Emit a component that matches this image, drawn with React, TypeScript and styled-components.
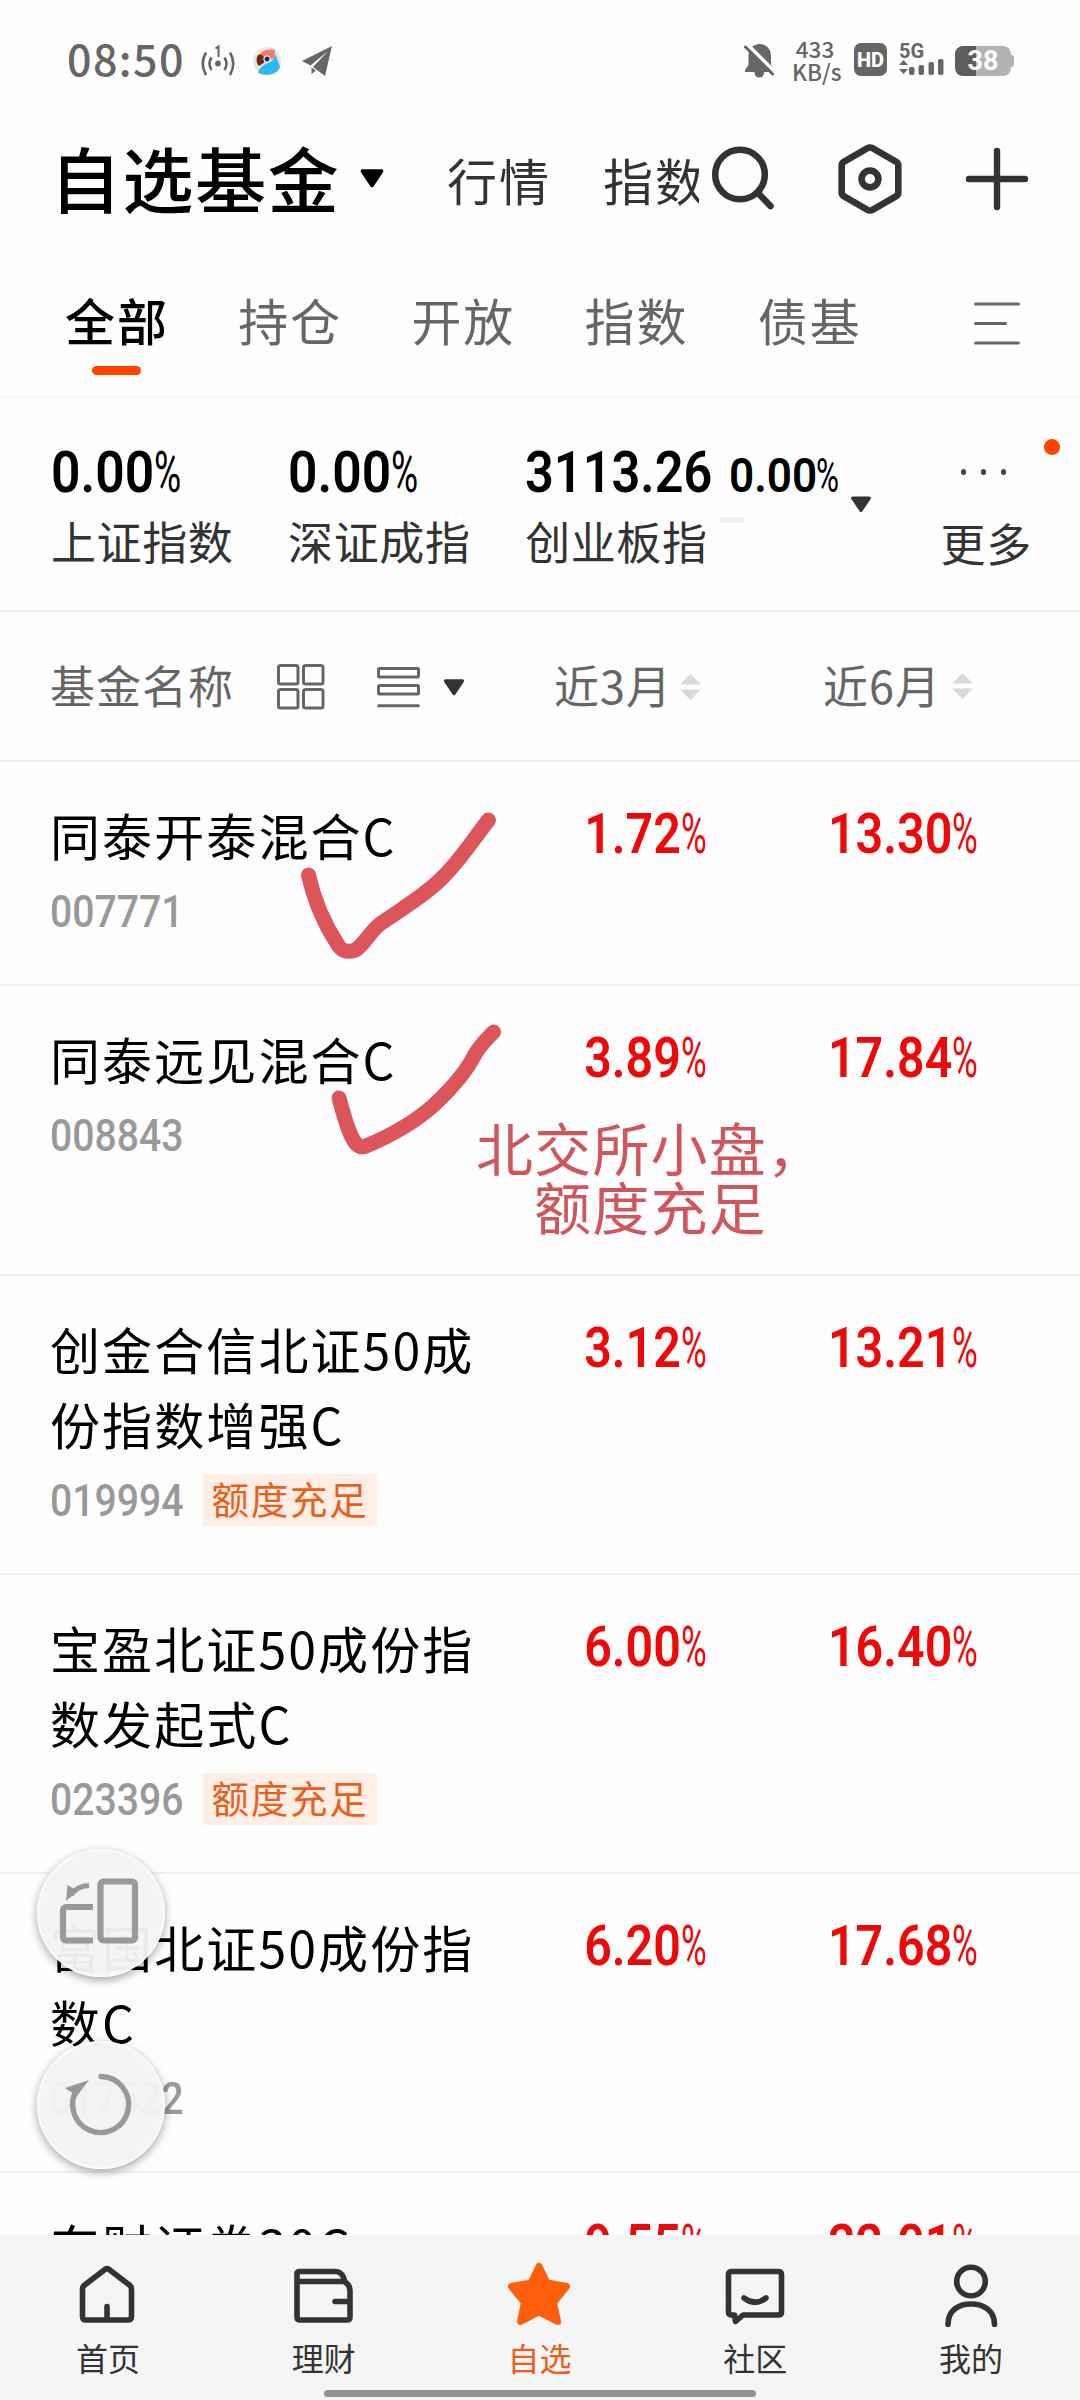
import React from 'react';
import styled, { createGlobalStyle } from 'styled-components';

const Global = createGlobalStyle`
  *, *::before, *::after { box-sizing: border-box; }
  html, body { margin: 0; padding: 0; background: #fefefe; }
  svg { display: block; flex: none; }
`;

const cjk = `'Noto Sans CJK SC', 'Noto Sans', sans-serif`;
const num = `Roboto, 'Noto Sans CJK SC', sans-serif`;

const Screen = styled.main`
  position: relative;
  width: 1080px;
  height: 2400px;
  overflow: hidden;
  display: flex;
  flex-direction: column;
  background: #fefefe;
  color: #000;
  font-family: ${cjk};
`;

const Gap = styled.span<{ $w: number }>`
  width: ${(p) => p.$w}px;
  flex: none;
`;

/* ---------- status bar ---------- */

const StatusBar = styled.header`
  height: 122px;
  flex: none;
  display: flex;
  justify-content: space-between;
  padding: 0 66px 0 67px;
  color: #666;
`;

const StatusGroup = styled.div`
  display: flex;
  align-items: center;
`;

const Clock = styled.span`
  width: 134px;
  font-size: 43px;
  font-weight: 500;
  line-height: 60px;
  letter-spacing: 1.4px;
  padding-bottom: 8px;
`;

const Speed = styled.div`
  width: 46px;
  margin: 0 16px 2px 17px;
  font-size: 22.5px;
  line-height: 23px;
  font-weight: 500;
  text-align: center;
  white-space: nowrap;
`;

const HdBadge = styled.span`
  width: 33px;
  height: 33px;
  margin-bottom: 3px;
  border-radius: 7px;
  background: #666;
  color: #fff;
  font: 800 20px/34px ${num};
  text-align: center;
`;

const Network = styled.div`
  width: 46px;
  height: 34px;
  margin: 0 10px 2px 12px;
  display: flex;
  flex-direction: column;
  font: 700 20px/16px ${num};
`;

const Battery = styled.div`
  width: 56px;
  height: 30px;
  border-radius: 8px;
  background: linear-gradient(90deg, #5c5c5c 38%, #b3b3b3 38%);
  color: #fff;
  font: 700 27px/31px ${num};
  text-align: center;
`;

const BatteryCap = styled.i`
  width: 3px;
  height: 12px;
  border-radius: 0 3px 3px 0;
  background: #b3b3b3;
`;

/* ---------- title ---------- */

const TitleBar = styled.div`
  height: 122px;
  flex: none;
  display: flex;
  align-items: center;
  padding: 0 50px 9px 50px;
`;

const Title = styled.h1`
  margin: 0;
  width: 309px;
  padding-bottom: 5px;
  font-size: 71px;
  line-height: 96px;
  font-weight: 500;
  letter-spacing: 1.6px;
  white-space: nowrap;
`;

const TopLink = styled.span<{ $w: number }>`
  width: ${(p) => p.$w}px;
  overflow: hidden;
  white-space: nowrap;
  color: #333;
  font-size: 50px;
  line-height: 70px;
  letter-spacing: 2px;
`;

const TitleIcons = styled.div`
  display: flex;
  align-items: center;
  margin-left: 10px;
  gap: 63px;
`;

/* ---------- tabs ---------- */

const Tabs = styled.nav`
  height: 154px;
  flex: none;
  display: flex;
  padding: 40px 0 0 65px;
  border-bottom: 2px solid #f9f9f9;
`;

const Tab = styled.div<{ $active?: boolean }>`
  width: 173.2px;
  display: flex;
  flex-direction: column;
  font-size: 50px;
  line-height: 71px;
  letter-spacing: 2px;
  color: ${(p) => (p.$active ? '#000' : '#666')};
  font-weight: ${(p) => (p.$active ? 500 : 400)};

  &::after {
    content: '';
    width: 49px;
    height: 9px;
    margin: 11px 0 0 27px;
    border-radius: 5px;
    background: ${(p) => (p.$active ? '#ff4400' : 'transparent')};
  }
`;

const TabMenu = styled.div`
  padding: 18px 0 0 43px;
`;

/* ---------- market indices ---------- */

const IndexStrip = styled.section`
  height: 214px;
  flex: none;
  display: flex;
  padding: 38px 0 0 51px;
  border-bottom: 2px solid #eee;
`;

const IndexCell = styled.div<{ $w: number }>`
  width: ${(p) => p.$w}px;
  display: flex;
  flex-direction: column;
`;

const IndexValues = styled.div`
  height: 72px;
  display: flex;
  align-items: baseline;
  line-height: 72px;
  white-space: nowrap;
`;

const IndexName = styled.span`
  color: #333;
  font-size: 45px;
  line-height: 66px;
  letter-spacing: 0.6px;
`;

const IndexToggle = styled.div`
  width: 93px;
  padding: 60px 0 0 2px;
`;

const More = styled.div`
  position: relative;
  width: 140px;
  display: flex;
  flex-direction: column;
  color: #333;
`;

const MoreDots = styled.div`
  display: flex;
  gap: 14.500px;
  height: 74px;
  padding: 33px 0 0 20px;

  i {
    width: 5.5px;
    height: 5.5px;
    border-radius: 50%;
    background: #444;
  }
`;

const RedDot = styled.i`
  position: absolute;
  left: 103px;
  top: 3px;
  width: 16px;
  height: 16px;
  border-radius: 50%;
  background: #ff4400;
`;

const Dash = styled.i`
  position: absolute;
  left: 720px;
  top: 517px;
  width: 25px;
  height: 6px;
  background: #f2f2f2;
`;

/* ---------- numbers ---------- */

const Digits = styled.span<{ $size: number; $w: number; $align?: string }>`
  display: flex;
  align-items: baseline;
  justify-content: ${(p) => p.$align || 'flex-start'};
  width: ${(p) => p.$w}px;
  font-family: ${num};
  font-size: ${(p) => p.$size}px;
  white-space: nowrap;
`;

const Main = styled.span<{ $origin: string; $k: number; $weight?: number }>`
  display: inline-block;
  transform: scaleX(${(p) => p.$k});
  transform-origin: ${(p) => p.$origin} center;
  font-weight: ${(p) => p.$weight || 600};
`;

const Percent = styled.span<{ $w: number }>`
  display: inline-block;
  width: ${(p) => p.$w}px;
  transform: scaleX(0.64);
  transform-origin: left center;
  font-weight: 400;
`;

/* ---------- table ---------- */

const TableHead = styled.div`
  height: 150px;
  flex: none;
  display: flex;
  align-items: center;
  padding-left: 50px;
  border-bottom: 2px solid #eee;
  color: #666;
  font-size: 45px;
  letter-spacing: 1px;
`;

const HeadLabel = styled.span<{ $w: number }>`
  width: ${(p) => p.$w}px;
  padding-bottom: 3px;
  line-height: 66px;
  white-space: nowrap;
`;

const HeadIcon = styled.span<{ $w: number }>`
  width: ${(p) => p.$w}px;
  padding-top: 2px;
`;

const FundRow = styled.article<{ $h: number }>`
  height: ${(p) => p.$h}px;
  flex: none;
  display: flex;
  padding: 35px 0 0 50px;
  border-bottom: 2px solid #f0f0f0;
`;

const FundInfo = styled.div`
  width: 456px;
`;

const FundName = styled.div`
  width: 440px;
  font-size: 50px;
  line-height: 75px;
  letter-spacing: 2.1px;
  white-space: pre-line;
`;

const FundMeta = styled.div`
  height: 52px;
  margin-top: 13px;
  display: flex;
  align-items: center;
  color: #999;
`;

const Tag = styled.span`
  margin-left: 16px;
  width: 174px;
  height: 52px;
  border-radius: 3px;
  background: #ffeee6;
  color: #e8601c;
  font-size: 37.5px;
  line-height: 48px;
  letter-spacing: 1.7px;
  text-align: center;
  white-space: nowrap;
`;

const Change = styled.div<{ $w: number }>`
  width: ${(p) => p.$w}px;
  padding-top: 5px;
  display: flex;
  justify-content: flex-end;
  color: #ee0808;
  line-height: 64px;
`;

/* ---------- overlays ---------- */

const Note = styled.div`
  position: absolute;
  left: 476px;
  top: 1117px;
  color: #d0565c;
  font-size: 57px;
  line-height: 59px;
  letter-spacing: 1.2px;
  white-space: nowrap;

  div + div { padding-left: 58px; }
`;

const Ink = styled.svg`
  position: absolute;
  left: 290px;
  top: 790px;
`;

const FloatButton = styled.div<{ $top: number }>`
  position: absolute;
  left: 37px;
  top: ${(p) => p.$top}px;
  width: 128px;
  height: 128px;
  border-radius: 50%;
  background: rgba(244, 244, 244, 0.96);
  border: 2px solid #fafafa;
  box-shadow: 0 3px 10px rgba(0, 0, 0, 0.36);
`;

/* ---------- bottom navigation ---------- */

const BottomNav = styled.nav`
  position: absolute;
  left: 0;
  top: 2235px;
  width: 1080px;
  height: 165px;
  display: grid;
  grid-template-columns: repeat(5, 215.8px);
  background: #f5f5f5;
`;

const NavItem = styled.div<{ $active?: boolean }>`
  display: flex;
  flex-direction: column;
  align-items: center;
  padding-top: 26px;
  color: ${(p) => (p.$active ? '#e8601c' : '#333')};
  font-size: 32px;
  line-height: 46px;

  svg { margin-bottom: 7px; }
`;

const HomeBar = styled.i`
  position: absolute;
  left: 324px;
  top: 2390px;
  width: 432px;
  height: 7px;
  border-radius: 4px;
  background: #939393;
`;

/* ---------- icons ---------- */

const Triangle = ({ w, h, c }: { w: number; h: number; c: string }) => (
  <svg width={w} height={h} viewBox="0 0 24 18">
    <path d="M3 2H21L12 15.5Z" fill={c} stroke={c} strokeWidth="3.5" strokeLinejoin="round" />
  </svg>
);

const SortArrows = () => (
  <svg width="21" height="27" viewBox="0 0 21 27">
    <path d="M10.5 0L21 10.5H0Z M0 15.5H21L10.5 26Z" fill="#d9d9d9" />
  </svg>
);

const HotspotIcon = () => (
  <svg width="34" height="32" viewBox="0 0 34 32" fill="none" stroke="#666" strokeWidth="2.6">
    <circle cx="17" cy="18.5" r="2.9" fill="#666" stroke="none" />
    <path d="M10.5 12.5Q6.5 18.5 10.5 25M23.5 12.5Q27.5 18.5 23.5 25M5 7.5Q-1.5 18.5 5 30M29 7.5Q35.5 18.5 29 30" />
    <path d="M14.5 3.5L17.5 1.5V12" strokeWidth="2" />
  </svg>
);

const BirdIcon = () => (
  <svg width="28" height="30" viewBox="0 0 28 30">
    <circle cx="14" cy="15" r="14" fill="#e9e7e4" />
    <path d="M5 12C7 5 14 2 22 4L21 12L12 16Z" fill="#fa7564" />
    <path d="M5 9C8 7 12 10 12 16L6 20C3 17 3 12 5 9Z" fill="#7a2418" />
    <path d="M22 7L27 21C25 28 15 31 5 27C6 22 10 19 15 17C20 15 22 12 22 7Z" fill="#2fb8f3" />
    <circle cx="14" cy="13" r="3.6" fill="#fff" />
    <circle cx="14" cy="13" r="2.5" fill="#123055" />
  </svg>
);

const PlaneIcon = () => (
  <svg width="31" height="31" viewBox="0 0 31 31" fill="#666">
    <path d="M30 0L0 15L8.5 19.5L26 5L11 21L23 30Z" />
    <path d="M9.500 21.5V28L14 24.5Z" />
  </svg>
);

const MuteIcon = () => (
  <svg width="31" height="34" viewBox="0 0 31 34">
    <path d="M15.5 0C22 0 27 5 27 11.5V21L30 26V28H20C20 31.5 18.5 33.5 15.5 33.5C12.5 33.5 10.5 31.5 10.5 28H1V26L4.5 21V11.5C4.5 5 9 0 15.5 0Z" fill="#666" />
    <path d="M3 0L31 28" stroke="#fefefe" strokeWidth="3.5" />
    <path d="M0.5 2L29.5 31" stroke="#666" strokeWidth="2.8" />
  </svg>
);

const SignalIcon = () => (
  <svg width="46" height="17" viewBox="0 0 46 17" fill="#666">
    <path d="M0 6L4.5 1L9 6ZM0 10H9L4.5 15Z" />
    <rect x="10" y="8" width="5.5" height="8" rx="2" />
    <rect x="19.5" y="6" width="5.5" height="10" rx="2" />
    <rect x="29.5" y="3" width="5.5" height="13" rx="2" />
    <rect x="39" y="0" width="5.5" height="16" rx="2" />
  </svg>
);

const SearchIcon = () => (
  <svg width="66" height="66" viewBox="0 0 66 66" fill="none" stroke="#333" strokeWidth="6.6" strokeLinecap="round">
    <circle cx="31" cy="28.5" r="24.8" />
    <path d="M49 47L61.5 60" />
  </svg>
);

const HexIcon = () => (
  <svg width="64" height="70" viewBox="0 0 64 70" fill="none" stroke="#333" strokeWidth="6.6" strokeLinejoin="round">
    <path d="M29.5 4.2Q32 2.8 34.5 4.2L58.3 17.8Q60.3 19 60.3 21.5V48.5Q60.3 51 58.3 52.2L34.5 65.8Q32 67.2 29.5 65.8L5.7 52.2Q3.7 51 3.7 48.5V21.5Q3.7 19 5.7 17.8Z" />
    <circle cx="32" cy="35" r="8.4" />
  </svg>
);

const PlusIcon = () => (
  <svg width="64" height="64" viewBox="0 0 64 64" stroke="#333" strokeWidth="6.4" strokeLinecap="round">
    <path d="M32 4V60M4 32H60" />
  </svg>
);

const MenuIcon = () => (
  <svg width="46" height="44" viewBox="0 0 46 44" stroke="#666" strokeWidth="3.2" strokeLinecap="round">
    <path d="M1.6 2H44.4M1.6 21.5H31.5M1.6 41H44.4" />
  </svg>
);

const GridIcon = () => (
  <svg width="48" height="46" viewBox="0 0 48 46" fill="none" stroke="#666" strokeWidth="3">
    {[1.5, 26.5].map((x) =>
      [1.5, 25.5].map((y) => <rect key={`${x}-${y}`} x={x} y={y} width="19.5" height="18.5" rx="2" />)
    )}
  </svg>
);

const ListIcon = () => (
  <svg width="43" height="41" viewBox="0 0 43 41" fill="none" stroke="#666" strokeWidth="3">
    <rect x="1.5" y="1.5" width="40" height="8.6" rx="1" />
    <rect x="1.5" y="18.5" width="40" height="8.6" rx="1" />
    <path d="M1.5 38.7H41.4" strokeLinecap="round" />
  </svg>
);

const RotateScreenIcon = () => (
  <svg width="124" height="124" viewBox="0 0 124 124" fill="none" stroke="#999" strokeWidth="6.2">
    <rect x="61.500" y="30.500" width="34.500" height="59" rx="3" />
    <path d="M54 56H28Q24 56 24 60V85.500Q24 89.500 28 89.500H54" />
    <path d="M50 34.5Q38 35 32 44" strokeWidth="5" />
    <path d="M28.500 34L27 50L39 40Z" fill="#999" stroke="none" />
  </svg>
);

const ResetIcon = () => (
  <svg width="124" height="124" viewBox="0 0 124 124" fill="none" stroke="#999" strokeWidth="5.4">
    <path d="M62 33.5A28 28 0 1 1 39 45" strokeLinecap="round" />
    <path d="M26 45L50 37L38 53Z" fill="#999" stroke="none" />
  </svg>
);

const navSvg = { width: 64, height: 66, viewBox: '0 0 64 66', fill: 'none', stroke: '#333', strokeWidth: 5.6, strokeLinecap: 'round' as const, strokeLinejoin: 'round' as const };

const HomeIcon = () => (
  <svg {...navSvg}>
    <path d="M29.5 8Q31 7 32.500 8L54 24.5Q55.500 26 55.500 28.5V55.500Q55.500 59 52 59H10Q6.500 59 6.500 55.500V28.5Q6.500 26 8 24.5ZM31 45.500V58.500" />
  </svg>
);
const WalletIcon = () => (
  <svg {...navSvg}>
    <path d="M5 22V12.500Q5 10.500 8 10.500H43Q50 10.500 52 18L53 21Q58 24 58 30V56Q58 59 55 59H8Q5 59 5 56V20.500H52M57 40.500H43" />
  </svg>
);
const StarIcon = () => (
  <svg {...navSvg} fill="#ff5f0a" stroke="#ff5f0a" strokeWidth={7}>
    <path d="M32 5.500L40 22L59.500 25.500L46.500 41.500L50.500 60.500L32 51L13.500 60.500L17.500 41.500L4.500 25.500L24 22Z" />
  </svg>
);
const ChatIcon = () => (
  <svg {...navSvg}>
    <path d="M9 10.500H55Q58.500 10.500 58.500 13.500V51Q58.500 54 55.500 54H20L12.500 60.500L11.500 54H9Q5.500 54 5.500 51V13.500Q5.500 10.500 9 10.500ZM21 37Q32 45.500 43 37" />
  </svg>
);
const UserIcon = () => (
  <svg {...navSvg}>
    <circle cx="32" cy="20.5" r="14.3" />
    <path d="M9 63.5C9 49 20 43 32 43S55.500 49 55.500 63.5" />
  </svg>
);

/* ---------- data ---------- */

type Fund = { name: string; code: string; tag?: string; m3: string; m6: string; h: number };

const funds: Fund[] = [
  { name: '同泰开泰混合C', code: '007771', m3: '1.72', m6: '13.30', h: 224 },
  { name: '同泰远见混合C', code: '008843', m3: '3.89', m6: '17.84', h: 290 },
  { name: '创金合信北证50成\n份指数增强C', code: '019994', tag: '额度充足', m3: '3.12', m6: '13.21', h: 299 },
  { name: '宝盈北证50成份指\n数发起式C', code: '023396', tag: '额度充足', m3: '6.00', m6: '16.40', h: 299 },
  { name: '富国北证50成份指\n数C', code: '017522', m3: '6.20', m6: '17.68', h: 299 },
  { name: '东财证券30C', code: '', m3: '9.55', m6: '22.01', h: 299 },
];

const Rate = ({ value }: { value: string }) => (
  <Digits $size={55} $w={180} $align="flex-end">
    <Main $origin="right" $k={0.88}>{value}</Main>
    <Percent $w={26}>%</Percent>
  </Digits>
);

const IndexRate = ({ size, w, k, pct }: { size: number; w: number; k: number; pct: number }) => (
  <Digits $size={size} $w={w}>
    <Digits $size={size} $w={w - pct}>
      <Main $origin="left" $k={k}>0.00</Main>
    </Digits>
    <Percent $w={pct}>%</Percent>
  </Digits>
);

const navItems = [
  { label: '首页', icon: <HomeIcon /> },
  { label: '理财', icon: <WalletIcon /> },
  { label: '自选', icon: <StarIcon />, active: true },
  { label: '社区', icon: <ChatIcon /> },
  { label: '我的', icon: <UserIcon /> },
];

export default function App() {
  return (
    <Screen>
      <Global />
      <StatusBar>
        <StatusGroup>
          <Clock>08:50</Clock>
          <HotspotIcon />
          <Gap $w={18} />
          <BirdIcon />
          <Gap $w={21} />
          <PlaneIcon />
        </StatusGroup>
        <StatusGroup>
          <MuteIcon />
          <Speed>433<br />KB/s</Speed>
          <HdBadge>HD</HdBadge>
          <Network>5G<SignalIcon /></Network>
          <Battery>38</Battery>
          <BatteryCap />
        </StatusGroup>
      </StatusBar>

      <TitleBar>
        <Title>自选基金</Title>
        <Triangle w={26} h={19} c="#000" />
        <Gap $w={62} />
        <TopLink $w={156}>行情</TopLink>
        <TopLink $w={96}>指数</TopLink>
        <TitleIcons>
          <SearchIcon />
          <HexIcon />
          <PlusIcon />
        </TitleIcons>
      </TitleBar>

      <Tabs>
        {['全部', '持仓', '开放', '指数', '债基'].map((t, i) => (
          <Tab key={t} $active={i === 0}>{t}</Tab>
        ))}
        <TabMenu><MenuIcon /></TabMenu>
      </Tabs>

      <IndexStrip>
        <IndexCell $w={238}>
          <IndexValues><IndexRate size={58} w={129} k={0.89} pct={26} /></IndexValues>
          <IndexName>上证指数</IndexName>
        </IndexCell>
        <IndexCell $w={238}>
          <IndexValues><IndexRate size={58} w={129} k={0.89} pct={26} /></IndexValues>
          <IndexName>深证成指</IndexName>
        </IndexCell>
        <IndexCell $w={324}>
          <IndexValues>
            <Digits $size={58} $w={204}><Main $origin="left" $k={0.87}>3113.26</Main></Digits>
            <IndexRate size={49} w={109} k={0.9} pct={22} />
          </IndexValues>
          <IndexName>创业板指</IndexName>
        </IndexCell>
        <IndexToggle><Triangle w={22} h={17} c="#333" /></IndexToggle>
        <More>
          <MoreDots><i /><i /><i /></MoreDots>
          <IndexName>更多</IndexName>
          <RedDot />
        </More>
      </IndexStrip>
      <Dash />

      <TableHead>
        <HeadLabel $w={227}>基金名称</HeadLabel>
        <HeadIcon $w={100}><GridIcon /></HeadIcon>
        <HeadIcon $w={65}><ListIcon /></HeadIcon>
        <HeadIcon $w={112}><Triangle w={24} h={17} c="#333" /></HeadIcon>
        <HeadLabel $w={126}>近3月</HeadLabel>
        <HeadIcon $w={143}><SortArrows /></HeadIcon>
        <HeadLabel $w={129}>近6月</HeadLabel>
        <SortArrows />
      </TableHead>

      {funds.map((f) => (
        <FundRow key={f.name} $h={f.h}>
          <FundInfo>
            <FundName>{f.name}</FundName>
            <FundMeta>
              <Digits $size={45} $w={137}><Main $origin="left" $k={0.87} $weight={500}>{f.code}</Main></Digits>
              {f.tag && <Tag>{f.tag}</Tag>}
            </FundMeta>
          </FundInfo>
          <Change $w={201}><Rate value={f.m3} /></Change>
          <Change $w={271}><Rate value={f.m6} /></Change>
        </FundRow>
      ))}

      <Note>
        <div>北交所小盘，</div>
        <div>额度充足</div>
      </Note>
      <Ink width="220" height="370" viewBox="290 790 220 370" fill="none" stroke="#db555b" strokeWidth="15" strokeLinecap="round" strokeLinejoin="round">
        <path d="M308.5 875C314 900 325 925 338 945Q342 951 346 951Q353 952 357 949C365 943 370 932 380 924C398 911 425 896 444 876C462 858 475 837 488.5 820" />
        <path d="M339 1098C344 1115 347 1130 354 1141Q359 1149 366 1146C390 1136 415 1122 434 1105C452 1088 466 1072 474 1056C480 1045 487 1039 493.5 1032" />
      </Ink>
      <FloatButton $top={1849}><RotateScreenIcon /></FloatButton>
      <FloatButton $top={2041}><ResetIcon /></FloatButton>

      <BottomNav>
        {navItems.map((n) => (
          <NavItem key={n.label} $active={n.active}>
            {n.icon}
            {n.label}
          </NavItem>
        ))}
      </BottomNav>
      <HomeBar />
    </Screen>
  );
}
